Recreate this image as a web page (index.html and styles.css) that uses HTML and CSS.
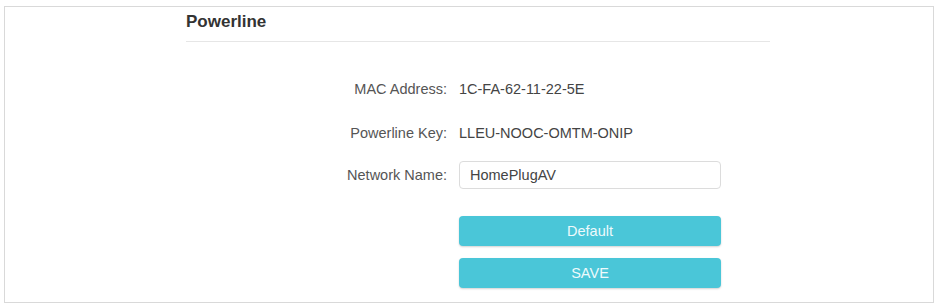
FILE: index.html
```html
<!DOCTYPE html>
<html>
<head>
<meta charset="utf-8">
<link rel="stylesheet" href="styles.css">
</head>
<body>
<div class="frame">
  <div class="panel">
    <h2 class="title">Powerline</h2>
    <div class="form">
      <div class="row row-mac">
        <span class="label">MAC Address:</span>
        <span class="value">1C-FA-62-11-22-5E</span>
      </div>
      <div class="row row-key">
        <span class="label">Powerline Key:</span>
        <span class="value">LLEU-NOOC-OMTM-ONIP</span>
      </div>
      <div class="row row-name">
        <span class="label">Network Name:</span>
        <input class="input" type="text" value="HomePlugAV">
      </div>
      <div class="actions">
        <button class="btn">Default</button>
        <button class="btn">SAVE</button>
      </div>
    </div>
  </div>
</div>
</body>
</html>
```
FILE: styles.css
```css
html, body {
  margin: 0;
  padding: 0;
  background: #ffffff;
}
body {
  font-family: "Liberation Sans", Arial, sans-serif;
  color: #4d4d4d;
}
.frame {
  box-sizing: border-box;
  margin: 6px 0 0 4px;
  width: 930px;
  height: 297px;
  border: 1px solid #d9d9d9;
  background: #fff;
}
.panel {
  margin-left: 181px;
  width: 584px;
}
.title {
  margin: 0;
  padding-top: 5px;
  height: 35px;
  box-sizing: border-box;
  font-size: 17px;
  line-height: 20px;
  font-weight: bold;
  color: #333333;
  border-bottom: 1px solid #e6e6e6;
}
.form {
  display: flex;
  flex-direction: column;
  padding-top: 33px;
}
.row {
  display: flex;
  align-items: center;
  height: 28px;
  font-size: 14.5px;
}
.row-mac {
  margin-bottom: 16px;
}
.row-key {
  margin-bottom: 14px;
}
.label {
  width: 273px;
  text-align: right;
  padding-right: 12px;
  box-sizing: border-box;
  color: #555555;
}
.value {
  color: #444444;
}
.input {
  box-sizing: border-box;
  width: 262px;
  height: 28px;
  border: 1px solid #dcdcdc;
  border-radius: 4px;
  padding: 0 10px;
  font-family: "Liberation Sans", Arial, sans-serif;
  font-size: 14.5px;
  color: #444444;
  outline: none;
}
.actions {
  display: flex;
  flex-direction: column;
  padding-left: 273px;
  padding-top: 27px;
  gap: 12px;
}
.btn {
  box-sizing: border-box;
  width: 262px;
  height: 30px;
  border: none;
  border-radius: 4px;
  background: #4ac6d8;
  color: #eefafc;
  font-family: "Liberation Sans", Arial, sans-serif;
  font-size: 14.5px;
  box-shadow: 0 1px 2px rgba(0, 0, 0, 0.18);
  padding: 0;
  cursor: pointer;
}
```
